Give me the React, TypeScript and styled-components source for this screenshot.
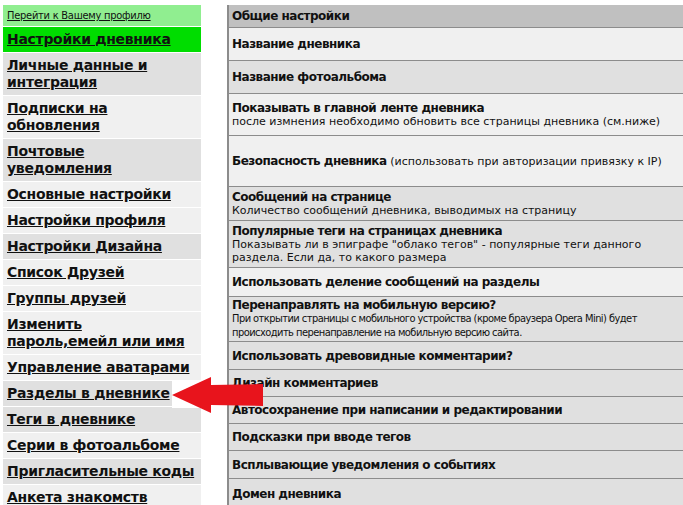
import React from "react";
import styled, { createGlobalStyle } from "styled-components";

const GlobalStyle = createGlobalStyle`
  html, body {
    margin: 0;
    padding: 0;
    overflow: hidden;
    background: #fff;
  }
  body {
    font-family: "DejaVu Sans", Verdana, sans-serif;
    color: #111;
  }
`;

const Page = styled.div`
  position: relative;
  display: flex;
  align-items: flex-start;
  gap: 26px;
  padding: 5px 0 0 3px;
  width: 720px;
`;

const Sidebar = styled.div`
  flex: 0 0 198px;
  display: flex;
  flex-direction: column;
`;

const ProfileLink = styled.a`
  display: block;
  height: 21px;
  line-height: 21px;
  padding-left: 4px;
  background: #90ee90;
  border-bottom: 1px solid #fff;
  font-family: Tahoma, "DejaVu Sans Condensed", sans-serif;
  font-size: 11px;
  letter-spacing: -0.25px;
  color: #111;
  text-decoration: underline;
`;

const NavItem = styled.a<{ $bg: string }>`
  display: block;
  padding: 4px 0 4px 4px;
  background: ${(p) => p.$bg};
  border-bottom: 1px solid #fff;
  font-size: 14px;
  letter-spacing: -0.3px;
  font-weight: bold;
  line-height: 17px;
  white-space: pre-line;
  color: #111;
  text-decoration: underline;
`;

const Panel = styled.div`
  flex: 0 0 470px;
  border-left: 2px solid #8c8c8c;
  display: flex;
  flex-direction: column;
`;

const Row = styled.div<{ $bg: string; $h: number }>`
  height: ${(p) => p.$h}px;
  box-sizing: border-box;
  padding: 0 4px 0 3px;
  display: flex;
  flex-direction: column;
  justify-content: center;
  background: ${(p) => p.$bg};
  border-bottom: 1px solid #8c8c8c;
  font-size: 12px;
`;

const Title = styled.div`
  font-weight: bold;
  line-height: 14px;
  letter-spacing: -0.5px;
  span {
    font-weight: normal;
    font-size: 11px;
    letter-spacing: 0;
  }
`;

const Desc = styled.div<{ $narrow?: boolean }>`
  max-width: 440px;
  line-height: ${(p) => (p.$narrow ? "14px" : "13px")};
  font-family: ${(p) =>
    p.$narrow ? 'Tahoma, "DejaVu Sans Condensed", sans-serif' : "inherit"};
  font-size: 11px;
  letter-spacing: ${(p) => (p.$narrow ? "-0.55px" : "0")};
`;

const Arrow = styled.svg`
  position: absolute;
  left: 0;
  top: 0;
  pointer-events: none;
`;

const DARK = "#e0e0e0";
const LIGHT = "#f0f0f0";

const navItems: [string, string][] = [
  ["Личные данные и\nинтеграция", DARK],
  ["Подписки на\nобновления", LIGHT],
  ["Почтовые\nуведомления", DARK],
  ["Основные настройки", LIGHT],
  ["Настройки профиля", LIGHT],
  ["Настройки Дизайна", DARK],
  ["Список Друзей", LIGHT],
  ["Группы друзей", LIGHT],
  ["Изменить\nпароль,емейл или имя", LIGHT],
  ["Управление аватарами", LIGHT],
  ["Разделы в дневнике", DARK],
  ["Теги в дневнике", DARK],
  ["Серии в фотоальбоме", LIGHT],
  ["Пригласительные коды", DARK],
  ["Анкета знакомств", LIGHT],
];

const App: React.FC = () => {
  return (
    <>
      <GlobalStyle />
      <Page>
        <Sidebar>
          <ProfileLink>Перейти к Вашему профилю</ProfileLink>
          <NavItem $bg="#00dd00">Настройки дневника</NavItem>
          {navItems.map(([text, bg]) => (
            <NavItem key={text} $bg={bg}>
              {text}
            </NavItem>
          ))}
        </Sidebar>

        <Panel>
          <Row $bg="#c0c0c0" $h={23}>
            <Title>Общие настройки</Title>
          </Row>
          <Row $bg={LIGHT} $h={33}>
            <Title>Название дневника</Title>
          </Row>
          <Row $bg={DARK} $h={33}>
            <Title>Название фотоальбома</Title>
          </Row>
          <Row $bg={LIGHT} $h={42}>
            <Title>Показывать в главной ленте дневника</Title>
            <Desc>после измнения необходимо обновить все страницы дневника (см.ниже)</Desc>
          </Row>
          <Row $bg={LIGHT} $h={51}>
            <Title>
              Безопасность дневника{" "}
              <span>(использовать при авторизации привязку к IP)</span>
            </Title>
          </Row>
          <Row $bg={DARK} $h={34}>
            <Title>Сообщений на странице</Title>
            <Desc>Количество сообщений дневника, выводимых на страницу</Desc>
          </Row>
          <Row $bg={DARK} $h={47}>
            <Title>Популярные теги на страницах дневника</Title>
            <Desc>
              Показывать ли в эпиграфе "облако тегов" - популярные теги данного
              раздела. Если да, то какого размера
            </Desc>
          </Row>
          <Row $bg={LIGHT} $h={29}>
            <Title>Использовать деление сообщений на разделы</Title>
          </Row>
          <Row $bg={DARK} $h={45}>
            <Title>Перенаправлять на мобильную версию?</Title>
            <Desc $narrow>
              При открытии страницы с мобильного устройства (кроме браузера Opera
              Mini) будет происходить перенаправление на мобильную версию сайта.
            </Desc>
          </Row>
          <Row $bg={DARK} $h={28}>
            <Title>Использовать древовидные комментарии?</Title>
          </Row>
          <Row $bg={DARK} $h={27}>
            <Title>Дизайн комментариев</Title>
          </Row>
          <Row $bg={DARK} $h={27}>
            <Title>Автосохранение при написании и редактировании</Title>
          </Row>
          <Row $bg={DARK} $h={27}>
            <Title>Подсказки при вводе тегов</Title>
          </Row>
          <Row $bg={DARK} $h={28}>
            <Title>Всплывающие уведомления о событиях</Title>
          </Row>
          <Row $bg={DARK} $h={30}>
            <Title>Домен дневника</Title>
          </Row>
        </Panel>

        <Arrow width="683" height="505" viewBox="0 0 683 505">
          <rect x="172" y="381" width="40" height="27" fill="#fff" />
          <polygon
            points="172,395 211,377 211,385 263,384 263,406 211,405 211,413"
            fill="#e8141c"
          />
        </Arrow>
      </Page>
    </>
  );
};

export default App;
